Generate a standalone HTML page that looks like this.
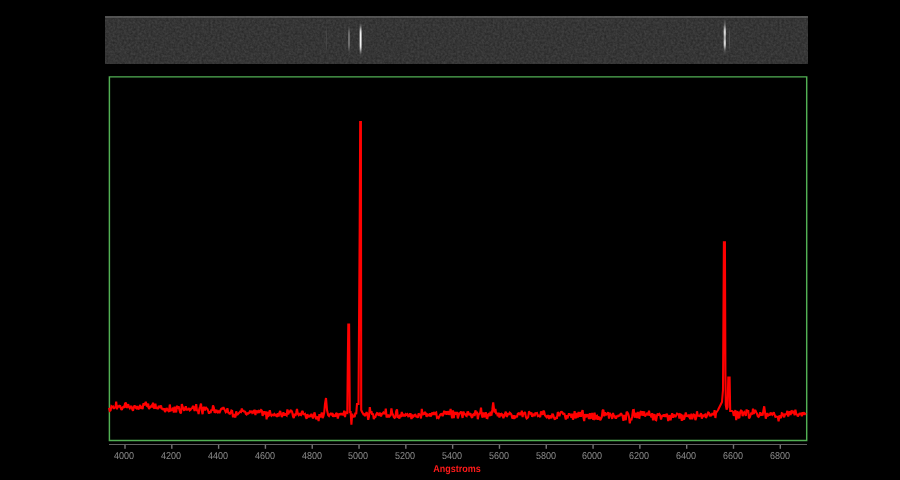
<!DOCTYPE html>
<html><head><meta charset="utf-8">
<style>
html,body{margin:0;padding:0;background:#000;width:900px;height:480px;overflow:hidden;}
body{position:relative;font-family:"Liberation Sans",sans-serif;text-rendering:geometricPrecision;}
svg{position:absolute;left:0;top:0;}
.lbl{position:absolute;top:451px;font-size:10px;color:#8c8c8c;width:40px;text-align:center;line-height:11px;transform:scaleX(0.9);}
#ang{position:absolute;left:407.1px;width:100px;text-align:center;top:464px;font-size:10px;font-weight:bold;color:#ff1a1a;line-height:11px;transform:scaleX(0.9);}
</style></head><body>
<svg width="900" height="480" viewBox="0 0 900 480">
<defs>
<filter id="nz" x="0" y="0" width="100%" height="100%" color-interpolation-filters="sRGB">
<feTurbulence type="fractalNoise" baseFrequency="0.45" numOctaves="2" seed="3"/>
<feColorMatrix type="matrix" values="0.14 0 0 0 0.14  0.14 0 0 0 0.14  0.14 0 0 0 0.14  0 0 0 0 1"/>
</filter>
<filter id="bl"><feGaussianBlur stdDeviation="0.55 2.2"/></filter>
</defs>
<rect x="105" y="16" width="703" height="48" filter="url(#nz)"/>
<rect x="105" y="16" width="703" height="2" fill="#626262" opacity="0.65"/>
<rect x="105" y="18" width="703" height="1" fill="#303030" opacity="0.5"/>
<g filter="url(#bl)">
<rect x="326" y="29" width="1" height="21" fill="#444"/>
<rect x="348.4" y="28" width="1.2" height="23" fill="#505050"/>
<rect x="348.4" y="31" width="1.2" height="17" fill="#8a8a8a"/>
<rect x="359.7" y="25" width="1.8" height="29" fill="#6a6a6a"/>
<rect x="359.7" y="29.5" width="1.8" height="19.5" fill="#f4f4f4"/>
<rect x="723.8" y="22" width="1.9" height="30" fill="#5e5e5e"/>
<rect x="723.8" y="27" width="1.9" height="20" fill="#a0a0a0"/>
<rect x="723.8" y="29.5" width="1.9" height="5.5" fill="#e6e6e6"/>
<rect x="723.8" y="40.5" width="1.9" height="5.5" fill="#e6e6e6"/>
<rect x="728.9" y="30" width="1.1" height="18" fill="#4c4c4c"/>
</g>
<path d="M109.4,76.85 H806.7 V440.4 H109.4 Z" fill="none" stroke="#52b054" stroke-width="1.45"/>
<path d="M109,407.9 L109.8,410.8 L110.6,410.3 L111.4,406.3 L112.2,407.0 L113,406.5 L113.8,408.8 L114.6,406.9 L115.4,408.0 L116.2,401.6 L117,409.3 L117.8,405.4 L118.6,407.3 L119.4,405.8 L120.2,406.1 L121,408.8 L121.8,410.0 L122.6,407.4 L123.4,406.8 L124.2,407.7 L125,403.6 L125.8,402.5 L126.6,407.9 L127.4,406.5 L128.2,404.2 L129,407.0 L129.8,408.2 L130.6,406.7 L131.4,405.9 L132.2,409.2 L133,410.8 L133.8,407.4 L134.6,405.4 L135.4,407.4 L136.2,408.1 L137,406.0 L137.8,408.2 L138.6,409.5 L139.4,406.6 L140.2,405.1 L141,407.8 L141.8,407.4 L142.6,409.1 L143.4,403.4 L144.2,404.7 L145,404.2 L145.8,401.8 L146.6,405.6 L147.4,406.2 L148.2,403.6 L149,409.0 L149.8,407.7 L150.6,406.7 L151.4,405.8 L152.2,407.3 L153,402.7 L153.8,407.7 L154.6,408.4 L155.4,403.7 L156.2,408.9 L157,407.3 L157.8,409.2 L158.6,406.0 L159.4,406.8 L160.2,407.8 L161,405.4 L161.8,409.3 L162.6,408.2 L163.4,410.1 L164.2,408.2 L165,412.0 L165.8,410.5 L166.6,408.1 L167.4,409.3 L168.2,410.6 L169,412.0 L169.8,404.5 L170.6,410.6 L171.4,410.3 L172.2,409.6 L173,407.7 L173.8,412.7 L174.6,406.6 L175.4,410.7 L176.2,412.3 L177,405.7 L177.8,408.7 L178.6,406.3 L179.4,409.7 L180.2,412.5 L181,413.4 L181.8,404.2 L182.6,406.5 L183.4,409.0 L184.2,410.8 L185,408.3 L185.8,406.3 L186.6,409.6 L187.4,409.6 L188.2,409.3 L189,408.1 L189.8,410.3 L190.6,409.7 L191.4,408.4 L192.2,408.2 L193,405.9 L193.8,407.7 L194.6,411.1 L195.4,407.3 L196.2,404.2 L197,411.2 L197.8,410.2 L198.6,414.0 L199.4,408.5 L200.2,406.3 L201,403.6 L201.8,410.5 L202.6,414.2 L203.4,407.1 L204.2,407.7 L205,410.5 L205.8,407.0 L206.6,408.5 L207.4,408.9 L208.2,410.9 L209,413.6 L209.8,411.4 L210.6,413.1 L211.4,409.4 L212.2,410.8 L213,405.4 L213.8,407.4 L214.6,412.9 L215.4,409.6 L216.2,411.8 L217,410.9 L217.8,412.2 L218.6,411.4 L219.4,413.0 L220.2,411.0 L221,409.2 L221.8,408.4 L222.6,408.7 L223.4,407.3 L224.2,408.9 L225,410.5 L225.8,412.2 L226.6,411.5 L227.4,408.2 L228.2,412.5 L229,412.9 L229.8,414.3 L230.6,412.9 L231.4,410.5 L232.2,410.9 L233,417.3 L233.8,414.1 L234.6,416.3 L235.4,417.3 L236.2,411.3 L237,414.6 L237.8,414.3 L238.6,413.4 L239.4,412.5 L240.2,411.5 L241,411.9 L241.8,408.5 L242.6,411.6 L243.4,410.2 L244.2,412.2 L245,411.1 L245.8,413.8 L246.6,414.4 L247.4,413.3 L248.2,413.5 L249,413.0 L249.8,411.5 L250.6,412.0 L251.4,410.9 L252.2,412.7 L253,411.7 L253.8,413.4 L254.6,409.6 L255.4,415.1 L256.2,411.3 L257,411.2 L257.8,412.3 L258.6,411.2 L259.4,412.9 L260.2,410.9 L261,409.9 L261.8,410.6 L262.6,415.9 L263.4,413.5 L264.2,411.3 L265,414.5 L265.8,411.3 L266.6,419.3 L267.4,411.8 L268.2,416.1 L269,415.5 L269.8,410.2 L270.6,413.9 L271.4,415.7 L272.2,414.8 L273,414.5 L273.8,415.9 L274.6,414.2 L275.4,415.2 L276.2,414.9 L277,417.0 L277.8,413.2 L278.6,416.5 L279.4,412.9 L280.2,411.0 L281,414.0 L281.8,416.9 L282.6,415.4 L283.4,412.3 L284.2,415.5 L285,413.5 L285.8,414.9 L286.6,415.5 L287.4,409.4 L288.2,414.4 L289,411.1 L289.8,411.9 L290.6,410.4 L291.4,410.6 L292.2,412.2 L293,416.3 L293.8,418.0 L294.6,413.6 L295.4,415.9 L296.2,412.7 L297,409.0 L297.8,413.9 L298.6,414.9 L299.4,413.1 L300.2,414.7 L301,415.1 L301.8,411.9 L302.6,411.0 L303.4,414.3 L304.2,414.3 L305,413.8 L305.8,416.9 L306.6,418.9 L307.4,414.2 L308.2,416.6 L309,416.7 L309.8,415.9 L310.6,416.8 L311.4,413.7 L312.2,416.2 L313,418.4 L313.8,415.1 L314.6,412.4 L315.4,416.4 L316.2,419.2 L317,418.1 L317.8,416.4 L318.6,421.2 L319.4,414.1 L320.2,417.2 L321,415.4 L321.8,412.5 L322.6,418.1 L323.4,416.1 L324.2,412.5 L325,404.0 L326,398.0 L327,410.0 L328.2,415.3 L329,416.0 L329.8,414.5 L330.6,413.7 L331.4,414.4 L332.2,413.0 L333,416.7 L333.8,415.0 L334.6,415.7 L335.4,416.5 L336.2,413.0 L337,413.8 L337.8,418.6 L338.6,415.3 L339.4,413.5 L340.2,414.9 L341,413.1 L341.8,415.2 L342.6,413.2 L343.4,415.3 L344.2,410.7 L345,417.0 L345.8,412.4 L347.3,413.0 L347.8,364.0 L348.3,324.5 L349.1,324.5 L349.8,413.0 L350.6,411.0 L351.4,424.6 L352.2,413.6 L353,417.3 L353.8,415.8 L354.6,417.1 L355.4,412.7 L356.2,414.2 L357,404.0 L358.5,404.0 L359.7,227.0 L360.2,122.0 L360.9,122.0 L361.2,410.0 L362,412.0 L362.6,412.8 L363.4,414.4 L364.2,414.2 L365,416.1 L365.8,414.3 L366.6,412.2 L367.4,414.3 L368.2,419.8 L369,416.6 L369.8,407.2 L370.6,413.1 L371.4,411.3 L372.2,414.8 L373,413.5 L373.8,419.1 L374.6,417.3 L375.4,416.9 L376.2,414.5 L377,413.1 L377.8,413.4 L378.6,415.6 L379.4,414.3 L380.2,412.6 L381,416.5 L381.8,414.1 L382.6,413.7 L383.4,412.6 L384.2,413.6 L385,413.7 L385.8,408.7 L386.6,417.3 L387.4,416.3 L388.2,414.5 L389,417.4 L389.8,415.8 L390.6,415.3 L391.4,408.3 L392.2,413.2 L393,414.7 L393.8,417.1 L394.6,417.9 L395.4,417.2 L396.2,411.3 L397,409.3 L397.8,416.7 L398.6,416.4 L399.4,418.6 L400.2,415.6 L401,416.0 L401.8,411.9 L402.6,416.3 L403.4,413.9 L404.2,415.5 L405,415.7 L405.8,414.2 L406.6,414.9 L407.4,414.2 L408.2,416.3 L409,416.2 L409.8,414.1 L410.6,414.1 L411.4,419.1 L412.2,414.5 L413,417.0 L413.8,416.4 L414.6,415.0 L415.4,414.8 L416.2,416.5 L417,416.7 L417.8,417.7 L418.6,413.4 L419.4,414.6 L420.2,415.1 L421,418.4 L421.8,408.9 L422.6,415.1 L423.4,412.7 L424.2,414.5 L425,411.9 L425.8,413.7 L426.6,416.8 L427.4,414.6 L428.2,415.3 L429,415.5 L429.8,413.3 L430.6,416.5 L431.4,414.5 L432.2,412.6 L433,413.9 L433.8,413.0 L434.6,414.9 L435.4,413.0 L436.2,412.5 L437,417.8 L437.8,417.3 L438.6,418.0 L439.4,416.3 L440.2,414.7 L441,413.9 L441.8,413.8 L442.6,416.2 L443.4,414.2 L444.2,410.7 L445,414.3 L445.8,411.2 L446.6,414.8 L447.4,411.9 L448.2,411.8 L449,414.6 L449.8,413.3 L450.6,409.0 L451.4,414.5 L452.2,418.3 L453,410.4 L453.8,418.0 L454.6,412.1 L455.4,413.0 L456.2,414.4 L457,412.0 L457.8,418.3 L458.6,416.0 L459.4,412.7 L460.2,413.7 L461,411.4 L461.8,414.6 L462.6,417.9 L463.4,411.5 L464.2,413.7 L465,414.1 L465.8,415.5 L466.6,416.0 L467.4,412.2 L468.2,412.1 L469,415.2 L469.8,413.7 L470.6,413.9 L471.4,416.8 L472.2,417.8 L473,414.5 L473.8,413.9 L474.6,416.0 L475.4,410.3 L476.2,414.2 L477,411.6 L477.8,419.2 L478.6,415.0 L479.4,413.6 L480.2,412.9 L481,407.7 L481.8,415.3 L482.6,417.6 L483.4,412.4 L484.2,416.1 L485,416.9 L485.8,412.2 L486.6,417.9 L487.4,418.1 L488.2,414.4 L489,413.4 L489.8,416.1 L490.6,411.7 L491.4,415.7 L492.3,410.0 L493.2,402.5 L494.1,410.0 L494.6,412.6 L495.4,408.9 L496.2,414.2 L497,412.9 L497.8,416.2 L498.6,412.7 L499.4,417.6 L500.2,413.3 L501,416.1 L501.8,414.1 L502.6,414.9 L503.4,418.3 L504.2,415.6 L505,413.8 L505.8,411.7 L506.6,416.9 L507.4,415.5 L508.2,413.1 L509,414.9 L509.8,412.7 L510.6,413.4 L511.4,414.5 L512.2,417.9 L513,418.0 L513.8,415.2 L514.6,417.9 L515.4,417.4 L516.2,415.7 L517,417.3 L517.8,413.6 L518.6,413.2 L519.4,414.1 L520.2,412.9 L521,415.1 L521.8,410.6 L522.6,417.0 L523.4,412.4 L524.2,414.3 L525,411.9 L525.8,416.8 L526.6,418.5 L527.4,417.9 L528.2,417.0 L529,411.3 L529.8,413.1 L530.6,413.8 L531.4,412.5 L532.2,416.9 L533,414.6 L533.8,414.3 L534.6,416.1 L535.4,413.2 L536.2,413.3 L537,413.1 L537.8,416.1 L538.6,415.7 L539.4,416.0 L540.2,417.0 L541,411.4 L541.8,413.4 L542.6,414.7 L543.4,410.6 L544.2,411.9 L545,415.5 L545.8,416.3 L546.6,417.2 L547.4,415.7 L548.2,415.7 L549,419.0 L549.8,415.5 L550.6,416.7 L551.4,418.3 L552.2,414.3 L553,414.4 L553.8,416.9 L554.6,419.1 L555.4,418.9 L556.2,417.7 L557,417.8 L557.8,412.1 L558.6,413.6 L559.4,416.1 L560.2,413.5 L561,412.0 L561.8,411.8 L562.6,412.5 L563.4,414.5 L564.2,412.9 L565,415.9 L565.8,419.5 L566.6,415.3 L567.4,418.5 L568.2,416.3 L569,413.3 L569.8,415.5 L570.6,413.8 L571.4,417.8 L572.2,413.6 L573,419.5 L573.8,417.7 L574.6,411.2 L575.4,417.0 L576.2,418.2 L577,412.8 L577.8,417.5 L578.6,411.8 L579.4,416.8 L580.2,412.2 L581,416.9 L581.8,411.9 L582.6,410.2 L583.4,417.2 L584.2,421.1 L585,414.1 L585.8,417.3 L586.6,415.5 L587.4,414.3 L588.2,416.4 L589,419.0 L589.8,413.1 L590.6,418.0 L591.4,417.7 L592.2,413.0 L593,418.9 L593.8,419.1 L594.6,412.6 L595.4,419.4 L596.2,416.0 L597,415.7 L597.8,419.8 L598.6,417.2 L599.4,417.6 L600.2,420.2 L601,418.9 L601.8,416.9 L602.6,410.6 L603.4,409.9 L604.2,416.3 L605,412.3 L605.8,415.5 L606.6,413.0 L607.4,414.9 L608.2,412.1 L609,418.7 L609.8,412.8 L610.6,415.1 L611.4,415.3 L612.2,418.9 L613,413.0 L613.8,416.3 L614.6,416.0 L615.4,417.9 L616.2,417.9 L617,415.6 L617.8,416.8 L618.6,414.8 L619.4,416.2 L620.2,414.6 L621,413.2 L621.8,414.8 L622.6,416.0 L623.4,420.8 L624.2,415.0 L625,417.3 L625.8,420.1 L626.6,411.8 L627.4,412.5 L628.2,413.8 L629,416.9 L629.8,423.3 L630.6,418.7 L631.4,420.2 L632.2,416.2 L633,410.2 L633.8,410.0 L634.6,417.6 L635.4,416.0 L636.2,412.8 L637,418.2 L637.8,411.8 L638.6,417.5 L639.4,417.8 L640.2,412.3 L641,411.2 L641.8,415.6 L642.6,411.1 L643.4,415.7 L644.2,411.3 L645,416.3 L645.8,415.1 L646.6,414.0 L647.4,412.8 L648.2,415.4 L649,410.8 L649.8,414.9 L650.6,414.9 L651.4,417.5 L652.2,413.2 L653,420.3 L653.8,415.9 L654.6,414.1 L655.4,419.7 L656.2,420.1 L657,415.5 L657.8,413.5 L658.6,415.6 L659.4,414.2 L660.2,415.3 L661,419.5 L661.8,416.6 L662.6,415.7 L663.4,415.8 L664.2,414.5 L665,416.3 L665.8,416.3 L666.6,413.7 L667.4,415.3 L668.2,421.1 L669,416.7 L669.8,415.3 L670.6,420.4 L671.4,415.7 L672.2,413.3 L673,417.8 L673.8,414.7 L674.6,415.6 L675.4,417.0 L676.2,415.4 L677,413.6 L677.8,414.0 L678.6,414.1 L679.4,418.5 L680.2,414.4 L681,414.8 L681.8,420.8 L682.6,414.6 L683.4,419.1 L684.2,418.9 L685,415.8 L685.8,412.6 L686.6,416.0 L687.4,415.8 L688.2,416.3 L689,414.6 L689.8,418.1 L690.6,419.2 L691.4,413.7 L692.2,419.2 L693,416.2 L693.8,414.6 L694.6,415.2 L695.4,420.1 L696.2,417.8 L697,411.3 L697.8,415.8 L698.6,415.8 L699.4,416.0 L700.2,415.3 L701,413.2 L701.8,418.7 L702.6,414.7 L703.4,416.0 L704.2,415.2 L705,414.6 L705.8,417.8 L706.6,416.7 L707.4,413.9 L708.2,412.5 L709,413.0 L709.8,416.3 L710.6,414.7 L711.4,415.2 L712.2,413.8 L713,414.0 L713.8,415.1 L714.6,410.2 L715.4,418.0 L716,413.0 L718,410.0 L720,406.0 L722,402.0 L723,390.0 L723.9,242.4 L724.9,242.4 L725.4,372.0 L725.8,405.0 L726.6,409.5 L727.6,407.0 L728.3,377.5 L729.6,377.5 L730.2,411.0 L732,411.0 L733,411.8 L733.8,415.8 L734.6,413.5 L735.4,410.1 L736.2,420.1 L737,412.4 L737.8,411.6 L738.6,417.6 L739.4,417.4 L740.2,411.8 L741,410.6 L741.8,411.2 L742.6,416.2 L743.4,413.2 L744.2,412.2 L745,413.7 L745.8,415.8 L746.6,409.5 L747.4,412.1 L748.2,410.2 L749,418.4 L749.8,417.2 L750.6,415.0 L751.4,412.6 L752.2,414.7 L753,408.6 L753.8,414.1 L754.6,410.4 L755.4,410.5 L756.2,412.3 L757,413.6 L757.8,416.2 L758.6,416.7 L759.4,415.5 L760.2,412.3 L761,415.6 L761.8,413.2 L762.6,415.6 L763.4,410.4 L764.2,406.3 L765,412.1 L765.8,418.7 L766.6,414.9 L767.4,413.2 L768.2,415.5 L769,414.9 L769.8,414.9 L770.6,412.5 L771.4,413.9 L772.2,414.7 L773,413.4 L773.8,412.4 L774.6,415.0 L775.4,416.9 L776.2,416.6 L777,416.8 L777.8,417.0 L778.6,421.4 L779.4,415.5 L780.2,416.7 L781,418.2 L781.8,413.3 L782.6,413.6 L783.4,415.6 L784.2,417.3 L785,414.3 L785.8,414.4 L786.6,413.7 L787.4,410.8 L788.2,416.5 L789,414.0 L789.8,411.3 L790.6,415.0 L791.4,410.6 L792.2,411.4 L793,413.2 L793.8,410.8 L794.6,415.4 L795.4,409.7 L796.2,413.8 L797,414.4 L797.8,416.4 L798.6,415.1 L799.4,413.7 L800.2,413.5 L801,413.4 L801.8,416.3 L802.6,412.2 L803.4,414.8 L804.2,413.2 L805,413.9 L805.8,412.8" fill="none" stroke="#ff0000" stroke-width="2.1" stroke-linejoin="miter" stroke-miterlimit="2" />
<line x1="109" y1="444.5" x2="807" y2="444.5" stroke="#626262" stroke-width="1.2"/>
<rect x="124.30" y="445" width="1.4" height="3.8" fill="#747474"/>
<rect x="171.11" y="445" width="1.4" height="3.8" fill="#747474"/>
<rect x="217.91" y="445" width="1.4" height="3.8" fill="#747474"/>
<rect x="264.72" y="445" width="1.4" height="3.8" fill="#747474"/>
<rect x="311.53" y="445" width="1.4" height="3.8" fill="#747474"/>
<rect x="358.34" y="445" width="1.4" height="3.8" fill="#747474"/>
<rect x="405.14" y="445" width="1.4" height="3.8" fill="#747474"/>
<rect x="451.95" y="445" width="1.4" height="3.8" fill="#747474"/>
<rect x="498.76" y="445" width="1.4" height="3.8" fill="#747474"/>
<rect x="545.56" y="445" width="1.4" height="3.8" fill="#747474"/>
<rect x="592.37" y="445" width="1.4" height="3.8" fill="#747474"/>
<rect x="639.18" y="445" width="1.4" height="3.8" fill="#747474"/>
<rect x="685.99" y="445" width="1.4" height="3.8" fill="#747474"/>
<rect x="732.79" y="445" width="1.4" height="3.8" fill="#747474"/>
<rect x="779.60" y="445" width="1.4" height="3.8" fill="#747474"/>

</svg>
<div class="lbl" style="left:104.3px">4000</div>
<div class="lbl" style="left:151.1px">4200</div>
<div class="lbl" style="left:197.9px">4400</div>
<div class="lbl" style="left:244.7px">4600</div>
<div class="lbl" style="left:291.5px">4800</div>
<div class="lbl" style="left:338.3px">5000</div>
<div class="lbl" style="left:385.1px">5200</div>
<div class="lbl" style="left:432.0px">5400</div>
<div class="lbl" style="left:478.8px">5600</div>
<div class="lbl" style="left:525.6px">5800</div>
<div class="lbl" style="left:572.4px">6000</div>
<div class="lbl" style="left:619.2px">6200</div>
<div class="lbl" style="left:666.0px">6400</div>
<div class="lbl" style="left:712.8px">6600</div>
<div class="lbl" style="left:759.6px">6800</div>

<div id="ang">Angstroms</div>
</body></html>
